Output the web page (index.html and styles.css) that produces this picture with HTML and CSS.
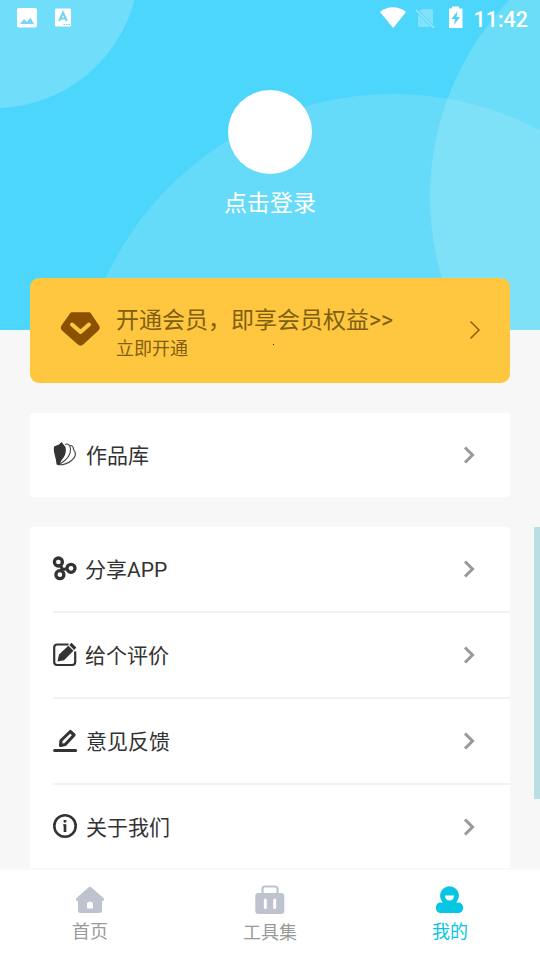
FILE: index.html
```html
<!DOCTYPE html>
<html lang="zh-CN">
<head>
<meta charset="utf-8">
<title>我的</title>
<link rel="stylesheet" href="styles.css">
</head>
<body>
<div class="app">
  <header class="hero">
    <svg class="hero-bg" viewBox="0 0 540 330" aria-hidden="true">
      <circle cx="-5" cy="-36" r="144" fill="#fff" fill-opacity=".2"/>
      <circle cx="393" cy="410" r="316" fill="#fffff0" fill-opacity=".14"/>
      <circle cx="714" cy="197" r="284" fill="#fffff4" fill-opacity=".17"/>
    </svg>
    <div class="status">
      <svg class="status-left" width="60" height="20" viewBox="0 0 60 20">
        <rect x="0" y="0" width="20" height="19.500" rx="2" fill="#fff"/>
        <path d="M3 16l4-5 3 3 3.500-4.500L17 16z" fill="#74d9f6"/>
        <rect x="38" y="0.500" width="16" height="18" rx="1" fill="#fff"/>
        <path d="M42.200 13L46 4.500l3.800 8.500M43.500 10.500h5" fill="none" stroke="#74d3ed" stroke-width="2"/>
        <path d="M46.500 16.500h1.500m1 0h1.500m1 0h1.500" stroke="#74d3ed" stroke-width="1.200"/>
      </svg>
      <svg class="status-right" width="88" height="24" viewBox="0 0 88 24">
        <path d="M0 6C7.500-.2 18.500-.2 26 6L13.200 22z" fill="#fff"/>
        <path d="M40 4.500L42 3h9q2 0 2 2v14q0 2-2 2H38V7z" fill="#fff" opacity=".3"/>
        <path d="M36 4l18 18" stroke="#4dd6fb" stroke-width="3"/>
        <path d="M36 4l18 18" stroke="#fff" stroke-width="1.300" opacity=".45"/>
        <path d="M69 2.500h3V.5h7v2h3.500V22H69z" fill="#fff"/>
        <path d="M77.500 5l-6 8h3.500l-1 6 6-8h-3.500z" fill="#54cff0"/>
      </svg>
      <span class="clock">11:42</span>
    </div>
    <div class="avatar"></div>
    <div class="login">点击登录</div>
  </header>

  <main class="content">
    <section class="vip">
      <svg class="gem" width="40" height="36" viewBox="0 0 40 36">
        <path d="M12 3.500h17l8 12q.9 1.300-.3 2.500L22 31.500q-1.500 1.500-3 0L3.800 18q-1.200-1.200-.3-2.500z" fill="#8a5200" stroke="#8a5200" stroke-width="4.500" stroke-linejoin="round"/>
        <path d="M12 13.500l8.500 7.500 8.500-7.500" fill="none" stroke="#ffc740" stroke-width="4" stroke-linecap="round" stroke-linejoin="round"/>
      </svg>
      <div class="vip-text">
        <div class="vip-title">开通会员，即享会员权益&gt;&gt;</div>
        <div class="vip-sub">立即开通</div>
      </div>
      <svg class="vip-arrow" width="12" height="20" viewBox="0 0 12 20"><path d="M1.500 1.500L10 10l-8.500 8.500" fill="none" stroke="#956409" stroke-width="1.600"/></svg>
      <i class="dot"></i>
    </section>

    <section class="card">
      <div class="row">
        <svg class="icon" width="26" height="26" viewBox="0 0 26 26">
          <path d="M2 4.500L7 2.500 9.500 0l4 5C15 12 11.500 16 9 19l-1.500 4.500-3-1C4.500 16 1 11 2 4.500z" fill="#333"/>
          <g fill="none" stroke="#444" stroke-width="1.100">
            <path d="M13 2.500c3.500-1.500 5 1 5.500 4.500.5 6-4 11-10.500 15"/>
            <path d="M18 3.500c2 0 3.500 1.500 3.500 4 3.500 4 2 7.500-2 11-3.500 3-7 4.300-12 4.300"/>
          </g>
        </svg>
        <span class="label">作品库</span>
        <svg class="arrow" width="14" height="20" viewBox="0 0 14 20"><path d="M2 2.500L9.500 10 2 17.500" /></svg>
      </div>
    </section>

    <section class="card list">
      <div class="row">
        <svg class="icon" width="26" height="26" viewBox="0 0 26 26" fill="none" stroke="#333">
          <path d="M7 7l3 5.500L8 19m2-5.500L18 12.500" stroke-width="3"/>
          <g fill="#fff" stroke-width="3.300"><circle cx="6.400" cy="6" r="4"/><circle cx="19" cy="12.300" r="4"/><circle cx="7.900" cy="18.700" r="4"/></g>
        </svg>
        <span class="label nudge">分享APP</span>
        <svg class="arrow" width="14" height="20" viewBox="0 0 14 20"><path d="M2 2.500L9.500 10 2 17.500" /></svg>
      </div>
      <div class="row">
        <svg class="icon" width="26" height="26" viewBox="0 0 26 26">
          <path d="M16.500 2.500H5.200Q2.200 2.500 2.200 5.500v14.500q0 3 3 3h15q3 0 3-3V9.500" fill="none" stroke="#333" stroke-width="2.200"/>
          <path d="M5.500 19.500l1.500-7L16.300 3.800l5.200 5L12 18.200zM17.300 3L19.500.8l4.800 4.700-2.100 2.400z" fill="#333"/>
        </svg>
        <span class="label nudge">给个评价</span>
        <svg class="arrow" width="14" height="20" viewBox="0 0 14 20"><path d="M2 2.500L9.500 10 2 17.500" /></svg>
      </div>
      <div class="row">
        <svg class="icon" width="26" height="26" viewBox="0 0 26 26" fill="none" stroke="#333" stroke-linejoin="round" stroke-linecap="round">
          <path d="M9 12.500L18.300 3.500l3.800 3.500-8.800 9.500-4.800 1z" stroke-width="3.100"/>
          <path d="M2.600 22.500h21" stroke-width="3"/>
        </svg>
        <span class="label">意见反馈</span>
        <svg class="arrow" width="14" height="20" viewBox="0 0 14 20"><path d="M2 2.500L9.500 10 2 17.500" /></svg>
      </div>
      <div class="row">
        <svg class="icon" width="26" height="26" viewBox="0 0 26 26" fill="none" stroke="#333">
          <circle cx="13" cy="12" r="10.700" stroke-width="2.600"/>
          <path d="M13 6v2.600M13 10.300v7.700" stroke-width="2.700"/>
          <path d="M11.300 11h1.500" stroke-width="1.400"/>
        </svg>
        <span class="label">关于我们</span>
        <svg class="arrow" width="14" height="20" viewBox="0 0 14 20"><path d="M2 2.500L9.500 10 2 17.500" /></svg>
      </div>
    </section>
  </main>

  <nav class="tabs">
    <div class="tab">
      <svg width="32" height="32" viewBox="0 0 32 32">
        <path d="M14.500 2.500q1.500-1.300 3 0L29.500 13q1.500 2.500-1 3h-.5v9.500q0 2.500-2.500 2.500h-19q-2.500 0-2.500-2.500V16h-.5q-2.500-.5-1-3z" fill="#bfc3d0"/>
        <path d="M13 23.500v-5.500q3-3 6 0v5.500z" fill="#fff"/>
      </svg>
      <span>首页</span>
    </div>
    <div class="tab mid">
      <svg width="32" height="32" viewBox="0 0 32 32">
        <path d="M8.500 10V4q0-2.500 2.500-2.500h10q2.500 0 2.500 2.500v6" fill="none" stroke="#bfc3d0" stroke-width="2.200"/>
        <rect x="1.300" y="8" width="29" height="21" rx="3" fill="#bfc3d0"/>
        <path d="M11.300 15v7.500M20.700 15v7.500" stroke="#fff" stroke-width="3" stroke-linecap="round"/>
      </svg>
      <span>工具集</span>
    </div>
    <div class="tab active">
      <svg width="32" height="32" viewBox="0 0 32 32">
        <rect x="2" y="17.500" width="27" height="10.500" rx="4.500" fill="#06c6e1"/>
        <circle cx="15.500" cy="10.800" r="9.500" fill="#06c6e1"/>
        <path d="M11 10.500h9q-.3 5-4.500 5t-4.500-5z" fill="#fff"/>
      </svg>
      <span>我的</span>
    </div>
  </nav>
  <i class="side-strip"></i>
</div>
</body>
</html>
```
FILE: styles.css
```css
* { box-sizing: border-box; }
body {
  margin: 0;
  background: #f7f7f7;
  font-family: Roboto, "Noto Sans CJK SC", sans-serif;
}
svg { display: block; flex: none; }
.app {
  position: relative;
  width: 540px;
  height: 960px;
  overflow: hidden;
  display: flex;
  flex-direction: column;
}
.hero {
  position: relative;
  height: 330px;
  flex: none;
  background: #4dd6fb;
  display: flex;
  flex-direction: column;
  align-items: center;
}
.hero-bg { position: absolute; inset: 0; width: 540px; height: 330px; }
.hero > :not(.hero-bg) { position: relative; }
.hero > .hero-bg { position: absolute; }
.status {
  width: 100%;
  height: 36px;
  padding: 0 12px 0 17px;
  display: flex;
  align-items: center;
}
.status-right { margin-left: auto; margin-right: 5px; margin-top: -1px; }
.clock {
  color: #fff;
  font-size: 21.500px;
  font-weight: 500;
  line-height: 36px;
  margin-top: 3px;
}
.avatar {
  width: 84px;
  height: 84px;
  margin-top: 54px;
  border-radius: 50%;
  background: #fff;
}
.login {
  margin-top: 13px;
  font-size: 23px;
  line-height: 34px;
  color: #fff;
}
.content {
  position: relative;
  flex: 1;
  min-height: 0;
  margin-top: -52px;
  padding: 0 30px;
}
.vip {
  position: relative;
  height: 105px;
  padding: 0 29px 0 30px;
  display: flex;
  align-items: center;
  border-radius: 9px;
  background: #ffc740;
  color: #806010;
}
.gem { margin-top: -3px; }
.vip-text { flex: 1; margin-left: 16px; margin-top: 3px; }
.vip-title { font-size: 23px; line-height: 32px; white-space: nowrap; }
.vip-sub { font-size: 18px; line-height: 23px; }
.vip-arrow { margin-top: -1px; }
.dot {
  position: absolute;
  left: 243px;
  top: 66px;
  width: 1px;
  height: 1px;
  background: #222;
}
.card {
  margin-top: 30px;
  background: #fff;
  border-radius: 3px;
}
.row {
  height: 84px;
  display: flex;
  align-items: center;
  padding: 0 33px 0 22px;
}
.list .row + .row {
  height: 86px;
  border-top: 2px solid #f2f2f2;
  margin-left: 23px;
  padding-left: 0;
}
.list .row + .row .icon { margin-left: -1px; }
.icon { margin-top: -1px; }
.label {
  flex: 1;
  margin-left: 8px;
  margin-top: 2px;
  font-size: 21px;
  line-height: 30px;
  color: #333;
}
.nudge { margin-left: 7px; }
.arrow path { fill: none; stroke: #999; stroke-width: 3; }
.tabs {
  position: relative;
  height: 92px;
  flex: none;
  border-top: 2px solid #f9f9f9;
  background: #fff;
  display: grid;
  grid-template-columns: repeat(3, 1fr);
}
.tab {
  display: flex;
  flex-direction: column;
  align-items: center;
  padding-top: 15px;
  font-size: 18px;
  line-height: 26px;
  color: #999;
}
.tab span { margin-top: 2px; }
.mid span { margin-top: 3px; }
.active { color: #06c6e1; }
.side-strip {
  position: absolute;
  right: 0;
  top: 527px;
  width: 6px;
  height: 272px;
  background: #b9dfe2;
}
```
